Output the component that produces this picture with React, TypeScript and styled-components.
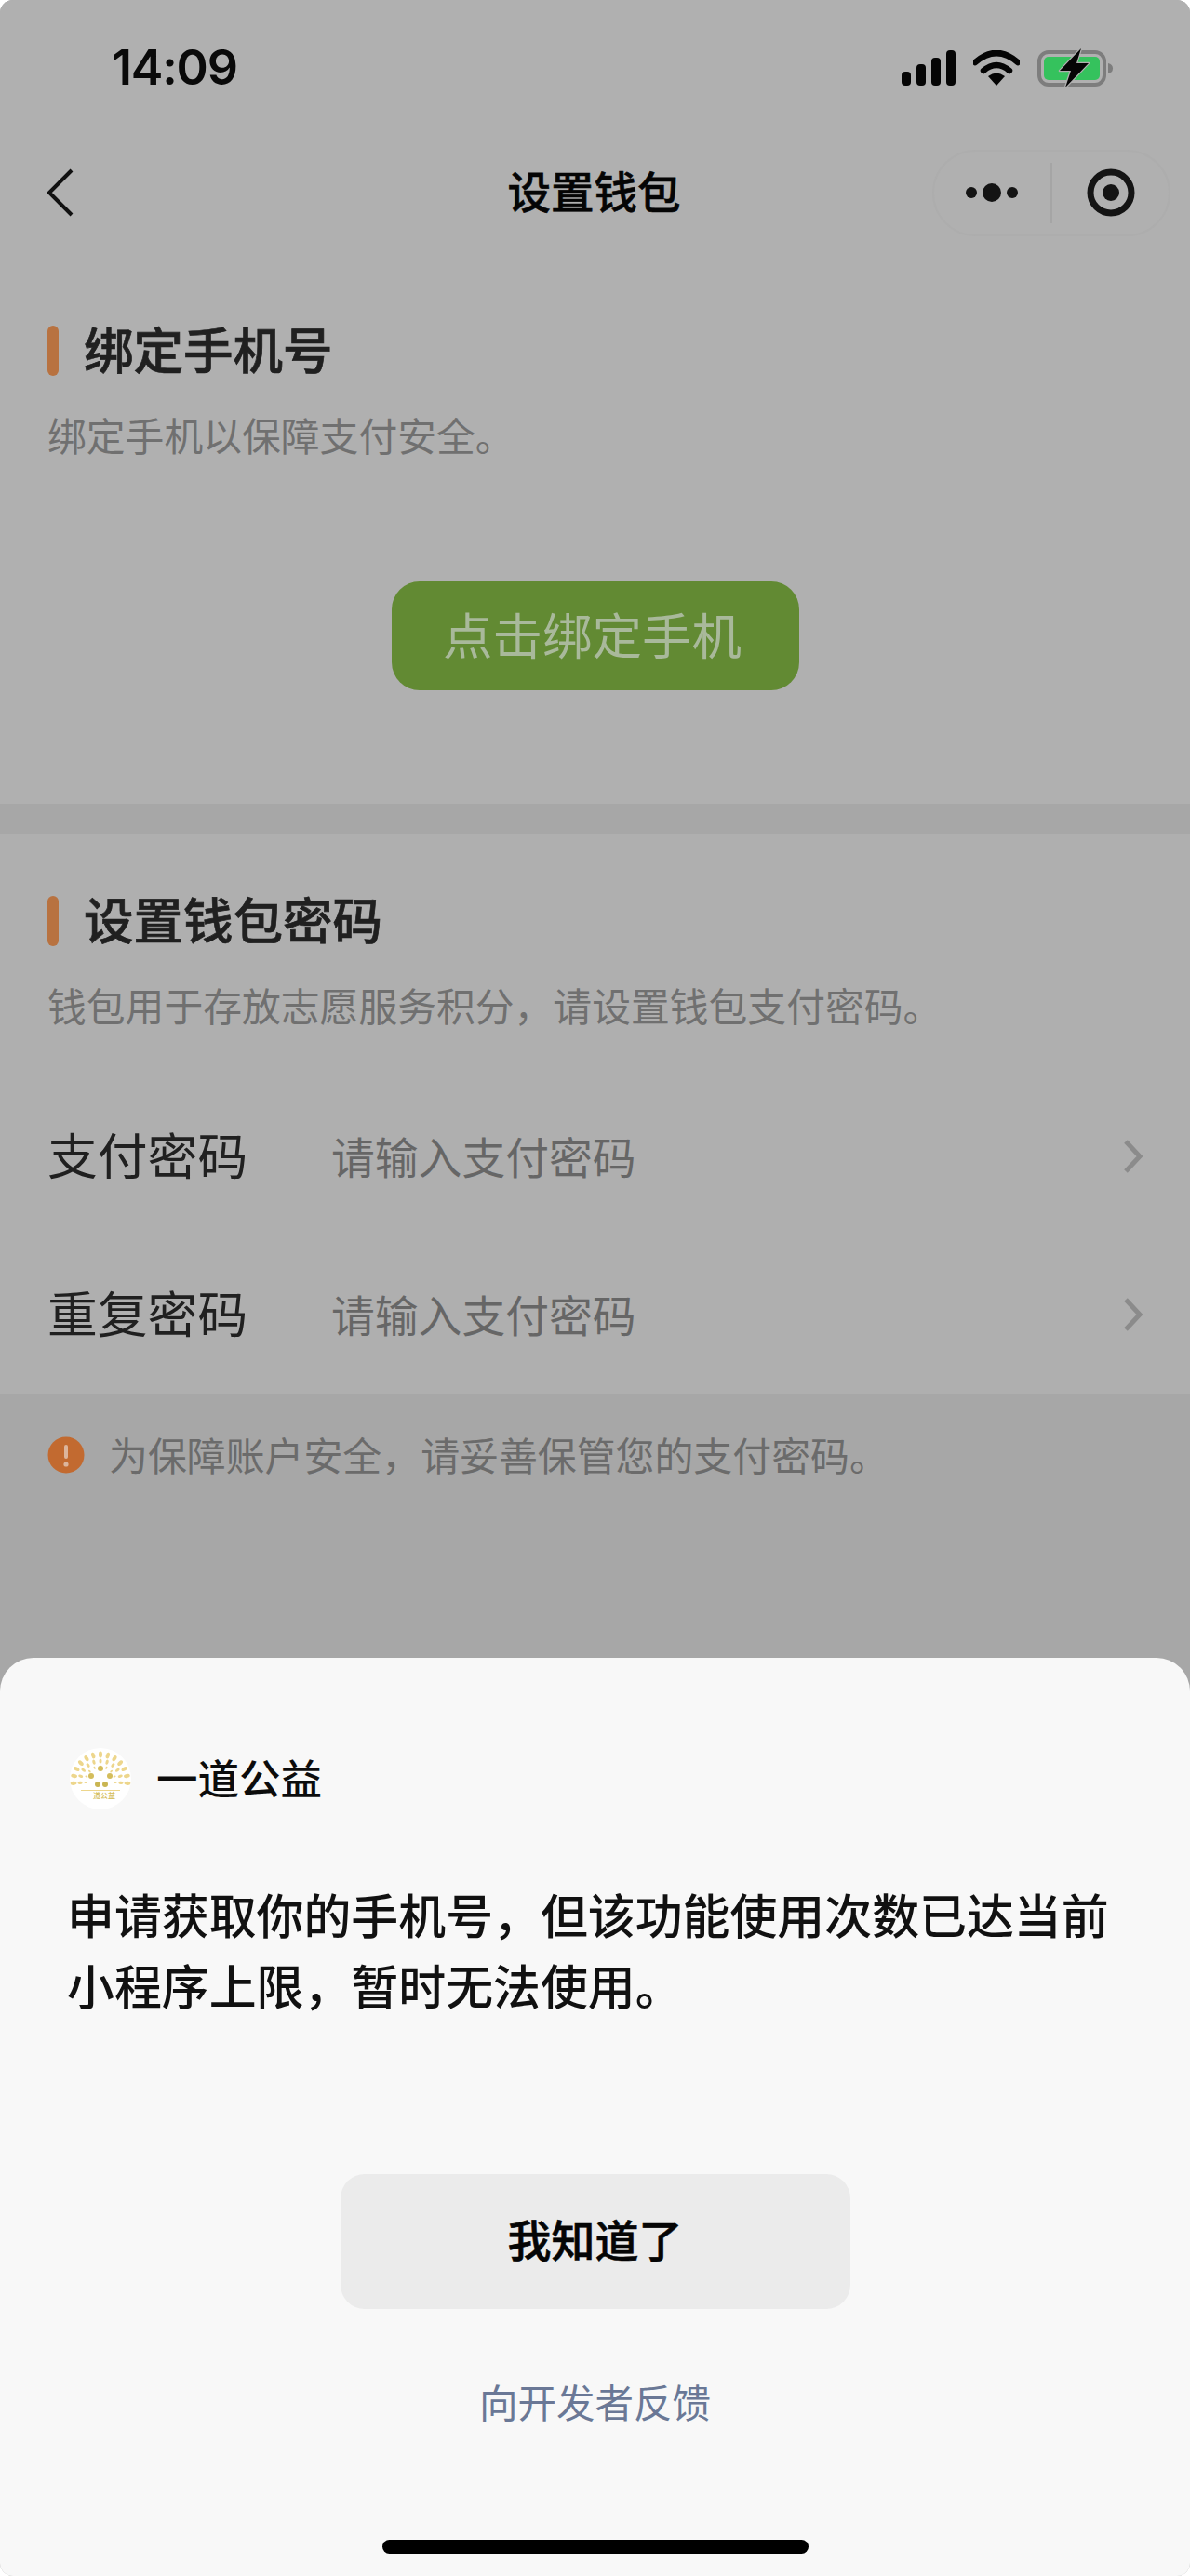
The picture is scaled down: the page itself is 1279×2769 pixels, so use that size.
import styled, { createGlobalStyle } from 'styled-components'

const GlobalStyle = createGlobalStyle`
    html, body {
        margin: 0;
        padding: 0;
        background: #ffffff;
    }
    * {
        box-sizing: border-box;
    }
`

const Page = styled.div`
    display: flex;
    flex-direction: column;
    width: 1279px;
    height: 2769px;
    overflow: hidden;
    border-radius: 14px;
    background: #a7a7a7;
    font-family: "Noto Sans CJK SC", "Noto Sans", sans-serif;
`

const StatusBar = styled.div`
    display: flex;
    align-items: center;
    justify-content: space-between;
    height: 146px;
    padding: 0 82px 0 120px;
    background: #b0b0b0;
`

const Time = styled.span`
    font-family: Inter, sans-serif;
    font-size: 52px;
    font-weight: 600;
    line-height: 60px;
    letter-spacing: -1.2px;
    color: #0a0a0a;
`

const StatusIcons = styled.div`
    display: flex;
    align-items: center;
    gap: 19px;
`

const NavBar = styled.div`
    display: flex;
    align-items: center;
    justify-content: space-between;
    position: relative;
    height: 122px;
    padding: 0 21px 0 50px;
    background: #b0b0b0;
`

const NavTitle = styled.div`
    position: absolute;
    left: 0;
    right: 2px;
    padding-bottom: 7px;
    text-align: center;
    font-size: 46.5px;
    font-weight: 500;
    line-height: 60px;
    color: #050505;
    -webkit-text-stroke: 0.6px #050505;
`

const Capsule = styled.div`
    display: flex;
    align-items: center;
    width: 256px;
    height: 93px;
    border: 2px solid #adadad;
    border-radius: 47px;
`

const CapsuleSide = styled.div`
    flex: 1;
    display: flex;
    align-items: center;
    justify-content: center;
`

const CapsuleLine = styled.div`
    width: 2px;
    height: 65px;
    background: #a5a5a5;
`

const Section = styled.section<{ $top: number; $bottom: number; $bg: string }>`
    padding: ${p => p.$top}px 0 ${p => p.$bottom}px;
    background: ${p => p.$bg};
`

const Divider = styled.div`
    height: 32px;
    background: #a7a7a7;
`

const Heading = styled.div`
    display: flex;
    align-items: center;
    gap: 28px;
    height: 54px;
    padding-left: 51px;
    font-size: 53.5px;
    font-weight: 500;
    line-height: 54px;
    color: #202020;
`

const HeadingBar = styled.span`
    width: 12px;
    height: 54px;
    border-radius: 6px;
    background: #b87240;
`

const HeadingText = styled.span`
    margin-top: -6px;
    margin-left: -1px;
    -webkit-text-stroke: 0.7px #202020;
`

const Description = styled.p`
    margin: 33px 0 0;
    padding: 0 0 2px 51px;
    font-size: 41.8px;
    font-weight: 400;
    line-height: 60px;
    color: #707070;
`

const BindButton = styled.div`
    display: flex;
    align-items: center;
    justify-content: center;
    width: 438px;
    height: 117px;
    margin: 126px auto 0;
    padding: 0 6px 6px 0;
    border-radius: 30px;
    background: #628a33;
    font-size: 53.5px;
    line-height: 60px;
    color: #a9b99b;
`

const FormList = styled.div`
    margin-top: 46px;
`

const FormRow = styled.div`
    display: flex;
    align-items: center;
    height: 170px;
    padding: 0 50px 0 51px;
`

const FormLabel = styled.span`
    width: 305px;
    margin-bottom: 6px;
    font-size: 53.8px;
    line-height: 60px;
    color: #202020;
`

const FormValue = styled.span`
    flex: 1;
    margin-bottom: 3px;
    font-size: 46.8px;
    line-height: 60px;
    color: #666666;
`

const Notice = styled.div`
    display: flex;
    align-items: center;
    gap: 26px;
    height: 60px;
    margin-top: 36px;
    padding-left: 51px;
    font-size: 41.9px;
    line-height: 60px;
    color: #6b6b6b;
`

const NoticeText = styled.span`
    margin-top: -3px;
`

const Sheet = styled.div`
    display: flex;
    flex-direction: column;
    align-items: stretch;
    margin-top: auto;
    height: 987px;
    padding-top: 97px;
    border-radius: 36px 36px 0 0;
    background: #f8f8f8;
`

const AppRow = styled.div`
    display: flex;
    align-items: center;
    gap: 27px;
    height: 66px;
    padding-left: 75px;
    font-size: 44.5px;
    font-weight: 500;
    line-height: 60px;
    color: #0c0c0c;
`

const AppName = styled.span`
    margin-top: -4px;
`

const Message = styled.p`
    margin: 74px 0 3px;
    padding: 0 72px;
    font-size: 50.9px;
    font-weight: 500;
    line-height: 76px;
    color: #111111;
`

const GotIt = styled.div`
    display: flex;
    align-items: center;
    justify-content: center;
    width: 548px;
    height: 145px;
    margin: 163px auto 0;
    padding-bottom: 7px;
    border-radius: 26px;
    background: #ebebeb;
    font-size: 47px;
    font-weight: 500;
    line-height: 60px;
    color: #050505;
    -webkit-text-stroke: 0.6px #050505;
`

const Feedback = styled.div`
    margin-top: 69px;
    padding-bottom: 2px;
    text-align: center;
    font-size: 41.5px;
    line-height: 60px;
    color: #6a7896;
`

const HomeIndicator = styled.div`
    width: 458px;
    height: 15px;
    margin: 117px auto 0;
    border-radius: 8px;
    background: #000000;
`

const Signal = () => (
    <svg width="58" height="38" viewBox="0 0 58 38">
        <rect x="0" y="23" width="10" height="15" rx="4" fill="#050505" />
        <rect x="16" y="15" width="10" height="23" rx="4" fill="#050505" />
        <rect x="32" y="8" width="10" height="30" rx="4" fill="#050505" />
        <rect x="48" y="0" width="10" height="38" rx="4" fill="#050505" />
    </svg>
)

const Wifi = () => (
    <svg width="50" height="38" viewBox="0 0 50 38">
        <path d="M2 13 Q25 -7 48 13" fill="none" stroke="#050505" strokeWidth="6.5" strokeLinecap="round" />
        <path d="M11 22 Q25 10 39 22" fill="none" stroke="#050505" strokeWidth="6.5" strokeLinecap="round" />
        <path d="M16 28 Q25 21 34 28 L25 38 Z" fill="#050505" />
    </svg>
)

const Battery = () => (
    <svg width="82" height="42" viewBox="0 0 82 42">
        <rect x="2" y="4" width="70" height="35" rx="10" fill="none" stroke="#7d7d7d" strokeWidth="4" />
        <rect x="7" y="9" width="60" height="25" rx="5" fill="#35c25d" />
        <path d="M76 16 Q81 17 81 21.5 Q81 26 76 27 Z" fill="#7d7d7d" />
        <path d="M47 0 L24 24 H36 L30 42 L55 16 H42 Z" fill="#050505" stroke="#b0b0b0" strokeWidth="2.5" strokeLinejoin="round" paintOrder="stroke" />
    </svg>
)

const Back = () => (
    <svg width="30" height="52" viewBox="0 0 30 52">
        <path d="M27 2 L3 26 L27 50" fill="none" stroke="#111111" strokeWidth="4" />
    </svg>
)

const MoreDots = () => (
    <svg width="58" height="22" viewBox="0 0 58 22">
        <circle cx="6" cy="11" r="6" fill="#141414" />
        <circle cx="28" cy="11" r="10" fill="#141414" />
        <circle cx="50" cy="11" r="6" fill="#141414" />
    </svg>
)

const Target = () => (
    <svg width="52" height="52" viewBox="0 0 52 52">
        <circle cx="26" cy="26" r="22" fill="none" stroke="#141414" strokeWidth="7" />
        <circle cx="26" cy="26" r="9" fill="#141414" />
    </svg>
)

const RowArrow = () => (
    <svg width="22" height="36" viewBox="0 0 22 36">
        <path d="M3 2 L18 18 L3 34" fill="none" stroke="#8b8b8b" strokeWidth="5" />
    </svg>
)

const WarnIcon = () => (
    <svg width="40" height="40" viewBox="0 0 40 40">
        <circle cx="20" cy="20" r="19.5" fill="#c26a30" />
        <rect x="18" y="9" width="4" height="15" rx="2" fill="#dcb59c" />
        <circle cx="20" cy="30" r="2.6" fill="#dcb59c" />
    </svg>
)

// rays of the little sun in the app logo
const rays = [
    { r: 29, n: 13, rx: 3.4 },
    { r: 22, n: 11, rx: 2.6 },
    { r: 16, n: 9, rx: 1.6 },
]

const Logo = () => (
    <svg width="66" height="66" viewBox="0 0 66 66">
        <circle cx="33" cy="33" r="33" fill="#ffffff" />
        {rays.map(ring =>
            Array.from({ length: ring.n }, (_, i) => {
                const a = Math.PI * (1.02 - (1.04 * i) / (ring.n - 1))
                const x = 33 + ring.r * Math.cos(a)
                const y = 36 - ring.r * Math.sin(a)
                return (
                    <ellipse
                        key={`${ring.r}-${i}`}
                        cx={x}
                        cy={y}
                        rx={ring.rx}
                        ry={ring.rx * 0.6}
                        fill="#edd68c"
                        transform={`rotate(${(-a * 180) / Math.PI} ${x} ${y})`}
                    />
                )
            }),
        )}
        <circle cx="33" cy="22" r="3" fill="#d4bd5c" />
        <circle cx="23" cy="30" r="3" fill="#d4bd5c" />
        <circle cx="43" cy="30" r="3" fill="#d4bd5c" />
        <circle cx="30" cy="39" r="3" fill="#c9b552" />
        <circle cx="38" cy="39" r="3" fill="#c9b552" />
        <rect x="12" y="45" width="42" height="1" fill="#edd68c" />
        <text x="33" y="54" textAnchor="middle" fontSize="8" fill="#d4bd5c">一道公益</text>
    </svg>
)

function App() {
    return (
        <Page>
            <GlobalStyle />
            <StatusBar>
                <Time>14:09</Time>
                <StatusIcons>
                    <Signal />
                    <Wifi />
                    <Battery />
                </StatusIcons>
            </StatusBar>
            <NavBar>
                <Back />
                <NavTitle>设置钱包</NavTitle>
                <Capsule>
                    <CapsuleSide>
                        <MoreDots />
                    </CapsuleSide>
                    <CapsuleLine />
                    <CapsuleSide>
                        <Target />
                    </CapsuleSide>
                </Capsule>
            </NavBar>

            <Section $top={82} $bottom={122} $bg="#b0b0b0">
                <Heading>
                    <HeadingBar />
                    <HeadingText>绑定手机号</HeadingText>
                </Heading>
                <Description>绑定手机以保障支付安全。</Description>
                <BindButton>点击绑定手机</BindButton>
            </Section>
            <Divider />
            <Section $top={67} $bottom={0} $bg="#afafaf">
                <Heading>
                    <HeadingBar />
                    <HeadingText>设置钱包密码</HeadingText>
                </Heading>
                <Description>钱包用于存放志愿服务积分，请设置钱包支付密码。</Description>
                <FormList>
                    <FormRow>
                        <FormLabel>支付密码</FormLabel>
                        <FormValue>请输入支付密码</FormValue>
                        <RowArrow />
                    </FormRow>
                    <FormRow>
                        <FormLabel>重复密码</FormLabel>
                        <FormValue>请输入支付密码</FormValue>
                        <RowArrow />
                    </FormRow>
                </FormList>
            </Section>
            <Notice>
                <WarnIcon />
                <NoticeText>为保障账户安全，请妥善保管您的支付密码。</NoticeText>
            </Notice>

            <Sheet>
                <AppRow>
                    <Logo />
                    <AppName>一道公益</AppName>
                </AppRow>
                <Message>申请获取你的手机号，但该功能使用次数已达当前小程序上限，暂时无法使用。</Message>
                <GotIt>我知道了</GotIt>
                <Feedback>向开发者反馈</Feedback>
                <HomeIndicator />
            </Sheet>
        </Page>
    )
}

export default App
